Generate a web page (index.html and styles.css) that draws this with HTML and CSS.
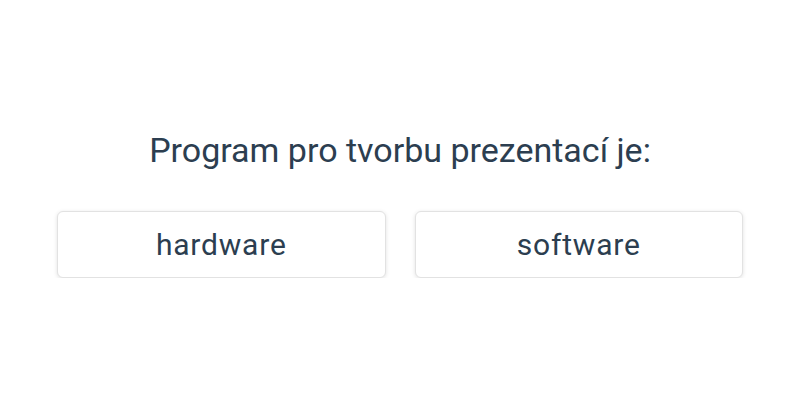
FILE: index.html
```html
<!DOCTYPE html>
<html lang="cs">
<head>
    <meta charset="UTF-8">
    <meta name="viewport" content="width=device-width, initial-scale=1.0">
    <title>Kvíz</title>
    <link rel="stylesheet" href="styles.css">
</head>
<body>
    <div class="quiz">
        <!-- Otázka -->
        <div class="question">Program pro tvorbu prezentací je:</div>

        <!-- Možnosti odpovědí -->
        <div class="answers">
            <button class="answer">hardware</button>
            <button class="answer">software</button>
        </div>
    </div>
</body>
</html>
```

FILE: styles.css
```css
body {
    font-family: Roboto, "Noto Sans", sans-serif;
    margin: 0;
    background-color: #fff;
    color: #2c3e50;
}

.quiz {
    width: 686px;
    margin: 0 auto;
    padding-top: 130px;
    text-align: center;
}

.question {
    font-size: 34px;
    line-height: 40px;
    margin-bottom: 41px;
}

.answers {
    display: flex;
    gap: 29px;
}

.answer {
    flex: 1;
    height: 67px;
    padding: 0;
    font-family: inherit;
    font-size: 30px;
    letter-spacing: 0.8px;
    color: #2c3e50;
    background-color: #fff;
    border: 1px solid #e2e2e2;
    border-radius: 6px;
    box-shadow: 0 1px 4px rgba(0, 0, 0, 0.12);
    cursor: pointer;
}
```
